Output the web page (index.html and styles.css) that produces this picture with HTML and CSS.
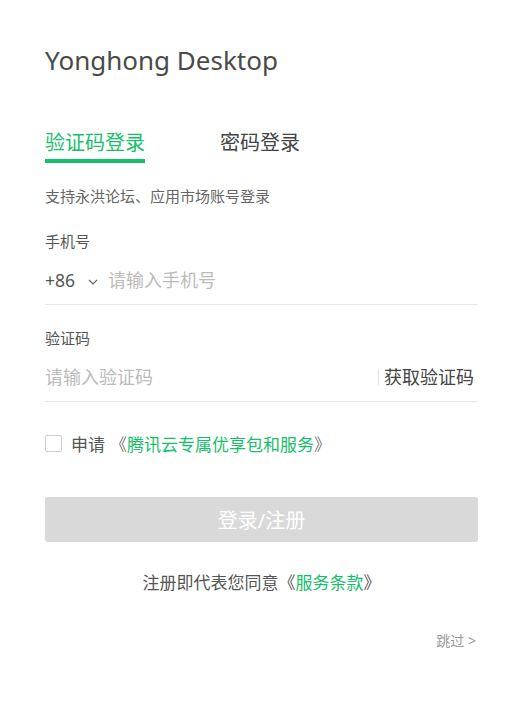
FILE: index.html
```html
<!DOCTYPE html>
<html>

<head>
    <title>Yonghong Desktop 登录</title>
    <link rel="stylesheet" href="styles.css">
</head>

<body>
    <div class="login">
        <h1 class="title">Yonghong Desktop</h1>

        <div class="tabs">
            <div class="tab active">验证码登录</div>
            <div class="tab">密码登录</div>
        </div>

        <p class="hint">支持永洪论坛、应用市场账号登录</p>

        <div class="field">
            <label class="field-label" for="phone">手机号</label>
            <div class="field-row">
                <span class="area-code">+86
                    <svg class="chevron" width="10" height="6" viewBox="0 0 10 6">
                        <polyline points="1,1 5,5 9,1" fill="none" stroke="#666" stroke-width="1.2" />
                    </svg>
                </span>
                <input type="text" id="phone" class="field-input" placeholder="请输入手机号" />
            </div>
        </div>

        <div class="field field-code">
            <label class="field-label" for="code">验证码</label>
            <div class="field-row">
                <input type="text" id="code" class="field-input" placeholder="请输入验证码" />
                <span class="divider"></span>
                <span class="get-code">获取验证码</span>
            </div>
        </div>

        <label class="apply">
            <input type="checkbox" class="check" />
            <span class="apply-text">申请</span>
            <span class="link-wrap">《<a class="link">腾讯云专属优享包和服务</a>》</span>
        </label>

        <button class="submit" disabled>登录/注册</button>

        <p class="agree">注册即代表您同意《<a class="link">服务条款</a>》</p>

        <div class="skip-row">
            <span class="skip">跳过 &gt;</span>
        </div>
    </div>
</body>

</html>
```

FILE: styles.css
```css
body {
    margin: 0;
    padding: 0;
    background: #fff;
    font-family: "Noto Sans", "Noto Sans CJK SC", sans-serif;
    color: #444;
}

.login {
    padding: 42px 44px 0 45px;
}

.title {
    margin: 0;
    font-size: 26px;
    line-height: 36px;
    font-weight: normal;
    color: #4a4a4a;
}

.tabs {
    display: flex;
    gap: 75px;
    margin-top: 51px;
}

.tab {
    font-size: 20px;
    line-height: 28px;
    color: #444;
    padding-bottom: 2px;
    border-bottom: 4px solid transparent;
}

.tab.active {
    color: #17bf6a;
    border-bottom-color: #17bf6a;
}

.hint {
    margin: 23px 0 0;
    font-size: 15px;
    line-height: 20px;
    color: #666;
}

.field {
    margin-top: 25px;
}

.field-code {
    margin-top: 23px;
}

.field-label {
    display: block;
    font-size: 15px;
    line-height: 20px;
    color: #555;
}

.field-row {
    display: flex;
    align-items: center;
    height: 24px;
    padding: 17px 0 12px;
    border-bottom: 1px solid #e6e6e6;
}

.area-code {
    display: flex;
    align-items: center;
    font-size: 17.5px;
    color: #555;
    margin-right: 10px;
}

.chevron {
    margin-left: 13px;
    margin-top: 3px;
}

.field-input {
    flex: 1;
    border: none;
    outline: none;
    padding: 0;
    margin: 0;
    height: 24px;
    font-family: inherit;
    font-size: 18px;
    color: #333;
    background: transparent;
}

.field-input::placeholder {
    color: #bbb;
}

.divider {
    width: 1px;
    height: 16px;
    background: #e3e3e3;
    margin-right: 5px;
}

.get-code {
    font-size: 18px;
    line-height: 24px;
    color: #444;
    margin-right: 4px;
}

.apply {
    display: flex;
    align-items: center;
    margin-top: 29px;
    height: 24px;
    font-size: 17px;
    color: #555;
}

.check {
    appearance: none;
    width: 17px;
    height: 17px;
    margin: 0 9px 0 0;
    border: 1px solid #ccc;
    border-radius: 2px;
    background: #fff;
}

.link-wrap {
    margin-left: 5px;
    color: #777;
}

.link {
    color: #17bf6a;
    text-decoration: none;
}

.submit {
    display: block;
    width: 100%;
    height: 45px;
    margin-top: 42px;
    border: none;
    border-radius: 3px;
    background: #d9d9d9;
    color: #fff;
    font-family: inherit;
    font-size: 20px;
}

.agree {
    margin: 29px 0 0;
    font-size: 17px;
    line-height: 24px;
    text-align: center;
    color: #555;
}

.skip-row {
    display: flex;
    justify-content: flex-end;
    margin-top: 37px;
}

.skip {
    font-size: 14px;
    line-height: 18px;
    color: #999;
    margin-right: 2px;
}
```
